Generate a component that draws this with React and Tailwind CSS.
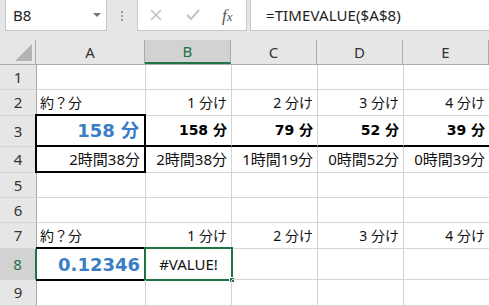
import React from 'react';

const FONT = { fontFamily: '"Noto Sans", "Noto Sans CJK JP", sans-serif' };
const BOLD = { fontFamily: '"DejaVu Sans", "Noto Sans CJK JP", sans-serif' };

const Cell = ({ w, align = 'right', className = '', children, style, border = 'border-b border-[#d4d4d4]' }) => (
  <div
    className={`relative shrink-0 h-full flex items-center border-r border-[#d4d4d4] ${border} ${
      align === 'right' ? 'justify-end pr-[4px]' : align === 'center' ? 'justify-center' : 'justify-start pl-[3px]'
    } ${w} ${className}`}
    style={style}
  >
    {children}
  </div>
);

const RowHead = ({ n, selected }) => (
  <div
    className={`shrink-0 w-[37px] h-full flex items-center justify-center border-r border-b border-[#ababab] border-b-[#d4d4d4] text-[15px] ${
      selected ? 'bg-[#d2d2d2] text-[#217346] border-r-2 border-r-[#217346]' : 'bg-[#e6e6e6] text-[#333]'
    }`}
  >
    {n}
  </div>
);

const Row = ({ h, n, selected, children }) => (
  <div className={`flex ${h}`}>
    <RowHead n={n} selected={selected} />
    {children}
  </div>
);

const Label = ({ n }) => (
  <span className="text-[14px] text-[#111]">
    {n}&nbsp;分け
  </span>
);

export default function App() {
  return (
    <div className="w-[489px] h-[306px] overflow-hidden bg-white" style={FONT}>
      {/* formula bar */}
      <div className="h-[40px] bg-[#e6e6e6] flex items-start">
        <div className="ml-[5px] w-[102px] h-[31px] bg-white border border-t-0 border-[#c6c6c6] flex items-center justify-between pl-[7px] pr-[5px]">
          <span className="text-[15px] text-[#222]">B8</span>
          <span className="w-0 h-0 border-l-[4px] border-r-[4px] border-t-[4px] border-l-transparent border-r-transparent border-t-[#777]" />
        </div>
        <div className="w-[30px] h-[31px] flex flex-col items-center justify-center gap-[2px]">
          <span className="w-[2px] h-[2px] bg-[#9a9a9a]" />
          <span className="w-[2px] h-[2px] bg-[#9a9a9a]" />
          <span className="w-[2px] h-[2px] bg-[#9a9a9a]" />
        </div>
        <div className="w-[110px] h-[31px] bg-white border border-t-0 border-[#c6c6c6] flex items-center">
          <svg width="12" height="12" viewBox="0 0 12 12" className="ml-[12px]">
            <path d="M1 1 L11 11 M11 1 L1 11" stroke="#c2c2c2" strokeWidth="1.5" fill="none" />
          </svg>
          <svg width="14" height="12" viewBox="0 0 14 12" className="ml-[24px]">
            <path d="M1 6 L5 10 L13 1" stroke="#c2c2c2" strokeWidth="2" fill="none" />
          </svg>
          <span
            className="ml-[22px] text-[17px] italic text-[#555] leading-none"
            style={{ fontFamily: '"Liberation Serif", serif' }}
          >
            f<span className="text-[13px]">x</span>
          </span>
        </div>
        <div className="ml-[3px] flex-1 h-[31px] bg-white border border-t-0 border-r-0 border-[#c6c6c6] flex items-center pl-[15px]">
          <span className="text-[15px] text-[#222] tracking-[0.1px]">=TIMEVALUE($A$8)</span>
        </div>
      </div>

      {/* column headers */}
      <div className="flex h-[25px] bg-[#e6e6e6] border-b border-[#ababab]">
        <div className="relative w-[37px] h-full border-r border-[#ababab]">
          <svg width="17" height="17" viewBox="0 0 17 17" className="absolute right-[3px] bottom-[3px]">
            <path d="M17 0 L17 17 L0 17 Z" fill="#b4b4b4" />
          </svg>
        </div>
        {['A', 'B', 'C', 'D', 'E'].map((c) => (
          <div
            key={c}
            className={`shrink-0 h-full flex items-center justify-center border-r border-[#ababab] text-[15px] ${
              c === 'A' ? 'w-[109px]' : 'w-[86px]'
            } ${c === 'B' ? 'bg-[#d2d2d2] text-[#217346] border-b-2 border-b-[#217346]' : 'text-[#333]'}`}
          >
            {c}
          </div>
        ))}
      </div>

      {/* rows */}
      <Row h="h-[25px]" n={1}>
        <Cell w="w-[109px]" />
        <Cell w="w-[86px]" />
        <Cell w="w-[86px]" />
        <Cell w="w-[86px]" />
        <Cell w="w-[86px]" />
      </Row>
      <Row h="h-[26px]" n={2}>
        <Cell w="w-[109px]" align="left">
          <span className="text-[14px] text-[#111]">約？分</span>
        </Cell>
        <Cell w="w-[86px]"><Label n={1} /></Cell>
        <Cell w="w-[86px]"><Label n={2} /></Cell>
        <Cell w="w-[86px]"><Label n={3} /></Cell>
        <Cell w="w-[86px]"><Label n={4} /></Cell>
      </Row>
      <Row h="h-[31px]" n={3}>
        <Cell w="w-[109px]" className="pr-[6px]" border="border-b-2 border-b-black">
          <div className="absolute left-[-2px] top-[-2px] right-[-1px] bottom-[-2px] border-2 border-black pointer-events-none" />
          <span className="text-[18px] font-bold text-[#3a7dc4]" style={BOLD}>
            158&nbsp;分
          </span>
        </Cell>
        {['158', '79', '52', '39'].map((v) => (
          <Cell key={v} w="w-[86px]" border="border-b-2 border-b-black">
            <span className="text-[14px] font-bold text-black" style={BOLD}>
              {v}&nbsp;分
            </span>
          </Cell>
        ))}
      </Row>
      <Row h="h-[26px]" n={4}>
        <Cell w="w-[109px]" className="pr-[5px]" border="border-b-2 border-b-black">
          <div className="absolute left-[-2px] top-[-1px] right-[-1px] bottom-[-2px] border-l-2 border-r-2 border-black pointer-events-none" />
          <span className="text-[15px] text-[#111]">2時間38分</span>
        </Cell>
        {['2時間38分', '1時間19分', '0時間52分', '0時間39分'].map((v) => (
          <Cell key={v} w="w-[86px]" className="pr-[3px]">
            <span className="text-[15px] text-[#111]">{v}</span>
          </Cell>
        ))}
      </Row>
      <Row h="h-[25px]" n={5}>
        <Cell w="w-[109px]" />
        <Cell w="w-[86px]" />
        <Cell w="w-[86px]" />
        <Cell w="w-[86px]" />
        <Cell w="w-[86px]" />
      </Row>
      <Row h="h-[25px]" n={6}>
        <Cell w="w-[109px]" />
        <Cell w="w-[86px]" />
        <Cell w="w-[86px]" />
        <Cell w="w-[86px]" />
        <Cell w="w-[86px]" />
      </Row>
      <Row h="h-[26px]" n={7}>
        <Cell w="w-[109px]" align="left">
          <span className="text-[14px] text-[#111]">約？分</span>
        </Cell>
        <Cell w="w-[86px]"><Label n={1} /></Cell>
        <Cell w="w-[86px]"><Label n={2} /></Cell>
        <Cell w="w-[86px]"><Label n={3} /></Cell>
        <Cell w="w-[86px]"><Label n={4} /></Cell>
      </Row>
      <Row h="h-[31px]" n={8} selected>
        <Cell w="w-[109px]" className="pr-[5px]">
          <div className="absolute left-[-1px] top-[-2px] right-[-1px] bottom-[-2px] border-t-2 border-b-2 border-black pointer-events-none" />
          <span className="text-[18px] font-bold text-[#3a7dc4]" style={BOLD}>
            0.12346
          </span>
        </Cell>
        <Cell w="w-[86px]" align="center">
          <div className="absolute left-[-2px] top-[-2px] right-[-2px] bottom-[-2px] border-2 border-[#217346] pointer-events-none" />
          <div className="absolute right-[-4px] bottom-[-4px] w-[6px] h-[6px] bg-[#217346] border border-white" />
          <span className="text-[15px] text-[#111]">#VALUE!</span>
        </Cell>
        <Cell w="w-[86px]" />
        <Cell w="w-[86px]" />
        <Cell w="w-[86px]" />
      </Row>
      <Row h="h-[26px]" n={9}>
        <Cell w="w-[109px]" />
        <Cell w="w-[86px]" />
        <Cell w="w-[86px]" />
        <Cell w="w-[86px]" />
        <Cell w="w-[86px]" />
      </Row>
    </div>
  );
}
